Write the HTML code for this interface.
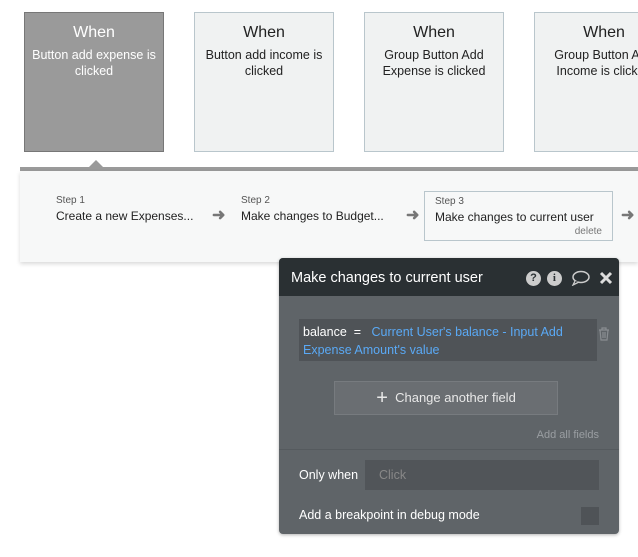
<!DOCTYPE html>
<html style="overflow:hidden"><head><style>
body{margin:0;width:638px;height:557px;background:#fff;position:relative;overflow:hidden;font-family:"Liberation Sans",sans-serif;}
.card{position:absolute;top:12px;width:138px;height:138px;border:1px solid #b9c6cc;background:#f0f2f2;text-align:center;color:#222;}
.card .w{font-size:16px;margin-top:11px;}
.card .t{font-size:12.5px;line-height:16px;margin-top:5px;padding:0 4px;}
.abs{position:absolute}
.step .s{font-size:10px;color:#555}
.step .m{font-size:12px;color:#222;margin-top:3px;white-space:nowrap}
.arr{position:absolute;top:205px;color:#777;font-size:16px;font-weight:bold}
.ic{display:inline-block;width:15px;height:15px;border-radius:8px;background:#ccc;color:#2a3033;font-size:11px;line-height:15px;text-align:center;font-weight:bold;vertical-align:middle;margin-left:6px}
</style></head><body>
<div class="card" style="left:24px;background:#9a9a9a;border-color:#777;color:#fff"><div class="w">When</div><div class="t">Button add expense is clicked</div></div>
<div class="card" style="left:194px"><div class="w">When</div><div class="t">Button add income is clicked</div></div>
<div class="card" style="left:364px"><div class="w">When</div><div class="t">Group Button Add Expense is clicked</div></div>
<div class="card" style="left:534px;width:104px;border-right:none;overflow:hidden"><div style="width:138px"><div class="w">When</div><div class="t">Group Button Add Income is clicked</div></div></div>
<div class="abs" style="left:89px;top:160px;width:0;height:0;border-left:7px solid transparent;border-right:7px solid transparent;border-bottom:7px solid #9a9a9a"></div>
<div class="abs" style="left:20px;top:167px;width:618px;height:4px;background:#9a9a9a"></div>
<div class="abs" style="left:20px;top:171px;width:618px;height:91px;background:#f7f8f8;box-shadow:0 2px 4px rgba(0,0,0,.15)"></div>
<div class="abs step" style="left:56px;top:195px"><div class="s">Step 1</div><div class="m">Create a new Expenses...</div></div>
<div class="arr" style="left:212px">➜</div>
<div class="abs step" style="left:241px;top:195px"><div class="s">Step 2</div><div class="m">Make changes to Budget...</div></div>
<div class="arr" style="left:406px">➜</div>
<div class="abs step" style="left:424px;top:191px;width:189px;height:50px;border:1px solid #b9c6cc;box-sizing:border-box;padding:4px 0 0 10px"><div class="s">Step 3</div><div class="m">Make changes to current user</div><div style="position:absolute;right:10px;bottom:3px;font-size:10px;color:#777">delete</div></div>
<div class="arr" style="left:621px">➜</div>
<div class="abs" style="left:279px;top:258px;width:340px;height:276px;background:#5f6468;border-radius:4px;overflow:hidden;box-shadow:0 1px 3px rgba(0,0,0,.3)">
 <div style="height:38px;background:#2a3033;color:#fff;font-size:14.5px;line-height:40px;padding-left:12px;position:relative">Make changes to current user
  <span style="position:absolute;right:6px;top:0;color:#ccc">
   <span class="ic">?</span><span class="ic" style="font-family:'Liberation Serif',serif">i</span>
   <svg width="20" height="16" viewBox="0 0 20 16" style="vertical-align:middle;margin-left:5px"><ellipse cx="10" cy="7" rx="8" ry="5.5" fill="none" stroke="#ccc" stroke-width="1.5"/><path d="M4 11 L2 15 L8 12" fill="#2a3033" stroke="#ccc" stroke-width="1.3"/></svg>
   <svg width="14" height="14" viewBox="0 0 14 14" style="vertical-align:middle;margin-left:4px"><path d="M2 2L12 12M12 2L2 12" stroke="#ddd" stroke-width="3"/></svg></span></div>
 <div class="abs" style="left:20px;top:61px;width:298px;height:42px;background:#4f5357;font-size:12.5px;line-height:18px;padding:4px;box-sizing:border-box;color:#5aa9f5"><span style="color:#fff">balance&nbsp; = </span>&nbsp; Current User's balance - Input Add Expense Amount's value</div>
 <svg class="abs" style="left:319px;top:69px" width="12" height="14" viewBox="0 0 12 14"><path d="M1 3H11M4 3V1H8V3M2 3L3 13H9L10 3M5 5V11M7 5V11" fill="none" stroke="#8a8e92" stroke-width="1.2"/></svg>
 <div class="abs" style="left:55px;top:123px;width:224px;height:34px;background:#6a6e72;border:1px solid #777b7f;box-sizing:border-box;color:#e8e8e8;font-size:13px;line-height:32px;text-align:center"><span style="font-size:20px;vertical-align:-2px">+</span>&nbsp; Change another field</div>
 <div class="abs" style="right:20px;top:171px;font-size:11px;color:#9a9ea2">Add all fields</div>
 <div class="abs" style="left:0;top:191px;width:340px;height:1px;background:#555a5e"></div>
 <div class="abs" style="left:20px;top:210px;font-size:12.5px;color:#fff">Only when</div>
 <div class="abs" style="left:86px;top:202px;width:234px;height:30px;background:#515559;font-size:12.5px;color:#888;line-height:30px;padding-left:14px;box-sizing:border-box">Click</div>
 <div class="abs" style="left:20px;top:250px;font-size:12.5px;color:#fff">Add a breakpoint in debug mode</div>
 <div class="abs" style="left:302px;top:249px;width:18px;height:18px;background:#4f5357"></div>
</div>
</body></html>
